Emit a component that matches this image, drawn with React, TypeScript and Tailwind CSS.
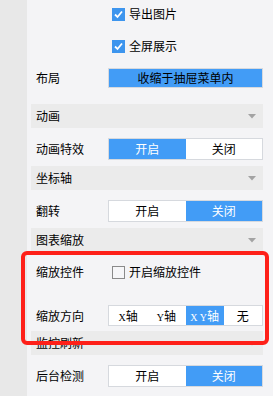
import React from "react";

const font = { fontFamily: '"Noto Sans CJK SC", "Noto Sans", sans-serif' };

function Check({ checked }: { checked: boolean }) {
  if (checked) {
    return (
      <span className="w-[13px] h-[13px] bg-[#3d95ee] flex items-center justify-center">
        <svg width="11" height="11" viewBox="0 0 11 11">
          <path d="M2 5.5 L4.5 8 L9 2.5" stroke="white" strokeWidth="1.8" fill="none" />
        </svg>
      </span>
    );
  }
  return <span className="w-[13px] h-[13px] border border-[#8a8a8a] bg-[#f6f6f8]" />;
}

function Header({ title }: { title: string }) {
  return (
    <div className="h-[24px] bg-[#ebebeb] flex items-center justify-between pl-[5px] pr-[7px] text-[12px] text-black">
      <span>{title}</span>
      <svg width="8" height="5" viewBox="0 0 8 5">
        <path d="M0 0 H8 L4 4.5 Z" fill="#a3a3a3" />
      </svg>
    </div>
  );
}

function Seg({ items, active, h = "h-[22px]" }: { items: React.ReactNode[]; active: number; h?: string }) {
  return (
    <div className={`flex-1 ${h} flex border border-[#d6d9de] bg-white`}>
      {items.map((it, i) => (
        <div
          key={i}
          className={`flex-1 flex items-center justify-center text-[12px] ${
            i === active ? "bg-[#429cf6] text-white" : "bg-white text-black"
          }`}
        >
          {it}
        </div>
      ))}
    </div>
  );
}

function Label({ t }: { t: string }) {
  return <span className="w-[77px] pl-[5px] text-[12px] text-black shrink-0">{t}</span>;
}

export default function App() {
  const axis = (l: string, active: boolean) => (
    <span className="flex items-baseline">
      <span
        className={`text-[10px] ${active ? "text-white" : "text-black"}`}
        style={{ fontFamily: '"Liberation Serif", serif' }}
      >
        {l}
      </span>
      <span>轴</span>
    </span>
  );
  return (
    <div className="relative w-[273px] h-[396px] flex bg-[#f4f4f6] overflow-hidden" style={font}>
      <div className="w-[27px] shrink-0 bg-[#e8e8e8]" />
      <div className="w-[232px] ml-[4px] flex flex-col">
        <div className="h-[28px] flex items-center pl-[81px] gap-[4px] text-[12px] text-black">
          <Check checked />
          <span>导出图片</span>
        </div>
        <div className="h-[28px] mt-[4px] flex items-center pl-[81px] gap-[4px] text-[12px] text-black">
          <Check checked />
          <span>全屏展示</span>
        </div>
        <div className="h-[28px] mt-[4px] flex items-center">
          <Label t="布局" />
          <div className="flex-1 h-[20px] bg-[#429cf6] border border-[#d6d9de] flex items-center justify-center text-[12px] text-black">
            收缩于抽屉菜单内
          </div>
        </div>
        <div className="mt-[12px]">
          <Header title="动画" />
        </div>
        <div className="h-[38px] pt-[10px]">
          <div className="h-[22px] flex items-center">
            <Label t="动画特效" />
            <Seg items={["开启", "关闭"]} active={0} />
          </div>
        </div>
        <Header title="坐标轴" />
        <div className="h-[38px] pt-[10px]">
          <div className="h-[22px] flex items-center">
            <Label t="翻转" />
            <Seg items={["开启", "关闭"]} active={1} />
          </div>
        </div>
        <Header title="图表缩放" />
        <div className="h-[40px] flex items-center">
          <Label t="缩放控件" />
          <div className="flex items-center gap-[4px] pl-[4px] text-[12px] text-black">
            <Check checked={false} />
            <span>开启缩放控件</span>
          </div>
        </div>
        <div className="h-[39px] pt-[13px]">
          <div className="h-[21px] flex items-center">
            <Label t="缩放方向" />
            <Seg
              h="h-[21px]"
              items={[axis("X", false), axis("Y", false), axis("X Y", true), "无"]}
              active={2}
            />
          </div>
        </div>
        <Header title="监控刷新" />
        <div className="h-[41px] pt-[10px]">
          <div className="h-[22px] flex items-center">
            <Label t="后台检测" />
            <Seg items={["开启", "关闭"]} active={1} />
          </div>
        </div>
      </div>
      <div className="absolute left-[21px] top-[251px] w-[248px] h-[94px] border-[4px] border-[#fe2019] rounded-[6px]" />
    </div>
  );
}
